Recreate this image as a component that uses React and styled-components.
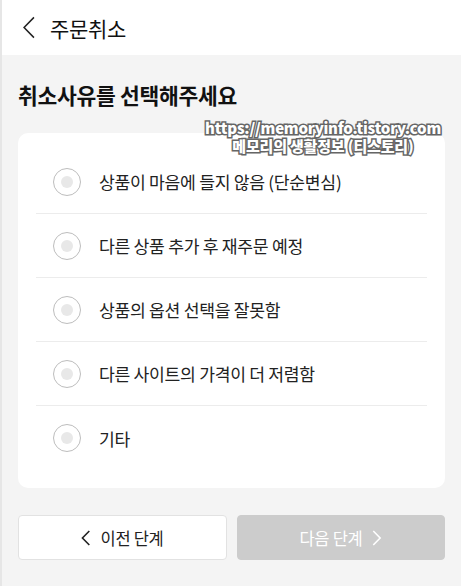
import React, { useState } from 'react'
import styled, { createGlobalStyle } from 'styled-components'

const GlobalStyle = createGlobalStyle`
  html, body {
    margin: 0;
    padding: 0;
    background: #f4f4f4;
  }
  body {
    font-family: "Noto Sans CJK KR", "Noto Sans", sans-serif;
    color: #222;
  }
`

const Page = styled.div`
  position: relative;
  width: 461px;
  height: 586px;
  box-sizing: border-box;
  border-left: 2px solid #e6e6e6;
  background: #f4f4f4;
  overflow: hidden;
`

const Header = styled.header`
  display: flex;
  align-items: center;
  height: 55px;
  padding-left: 17px;
  gap: 12px;
  background: #fff;
`

const BackButton = styled.button`
  display: flex;
  align-items: center;
  justify-content: center;
  width: 19px;
  height: 30px;
  padding: 0;
  border: 0;
  background: none;
  cursor: pointer;
`

const Title = styled.h1`
  margin: 0;
  font-size: 21px;
  font-weight: 400;
  letter-spacing: -0.3px;
  color: #111;
`

const Content = styled.main`
  padding: 24px 16px 0 16px;
`

const Heading = styled.h2`
  margin: 0 0 22px 0;
  height: 32px;
  line-height: 32px;
  font-size: 21.5px;
  font-weight: 700;
  letter-spacing: -0.3px;
  color: #111;
`

const Card = styled.div`
  background: #fff;
  border-radius: 10px;
  padding: 17px 18px 18px 18px;
`

const Option = styled.label`
  display: flex;
  align-items: center;
  gap: 18px;
  height: 64px;
  box-sizing: border-box;
  padding-left: 17px;
  border-bottom: ${p => (p.$last ? 'none' : '1px solid #ececec')};
  cursor: pointer;
`

const Radio = styled.span`
  display: flex;
  align-items: center;
  justify-content: center;
  width: 28px;
  height: 28px;
  box-sizing: border-box;
  border-radius: 50%;
  border: 1px solid ${p => (p.$checked ? '#222' : '#bdbdbd')};
  flex-shrink: 0;

  &::after {
    content: '';
    width: 12px;
    height: 12px;
    border-radius: 50%;
    background: ${p => (p.$checked ? '#222' : '#e8e8e8')};
  }
`

const OptionText = styled.span`
  font-size: 17.2px;
  letter-spacing: -0.3px;
  color: #222;
`

const Actions = styled.div`
  display: grid;
  grid-template-columns: 1fr 1fr;
  gap: 10px;
  margin-top: 27px;
`

const StepButton = styled.button`
  display: flex;
  align-items: center;
  justify-content: center;
  gap: 10px;
  height: 45px;
  border-radius: 4px;
  font-family: inherit;
  font-size: 16.5px;
  letter-spacing: -0.3px;
  border: 1px solid ${p => (p.$disabled ? '#cccccc' : '#e2e2e2')};
  background: ${p => (p.$disabled ? '#cccccc' : '#fff')};
  color: ${p => (p.$disabled ? '#fff' : '#222')};
  cursor: ${p => (p.$disabled ? 'default' : 'pointer')};
`

const Watermark = styled.div`
  position: absolute;
  top: 119px;
  left: 198px;
  width: 246px;
  text-align: center;
  font-family: "Noto Sans CJK KR", sans-serif;
  font-weight: 900;
  font-size: 15px;
  line-height: 18px;
  color: #fff;
  -webkit-text-stroke: 3px #666;
  paint-order: stroke fill;
  letter-spacing: -0.2px;
  pointer-events: none;
`

const Chevron = ({ dir = 'left', size = 14, color = '#222', stroke = 1.6 }) => (
  <svg width={size * 0.6} height={size} viewBox="0 0 6 10" fill="none">
    <path
      d={dir === 'left' ? 'M5.2 0.6 L0.9 5 L5.2 9.4' : 'M0.8 0.6 L5.1 5 L0.8 9.4'}
      stroke={color}
      strokeWidth={stroke}
      vectorEffect="non-scaling-stroke"
    />
  </svg>
)

const reasons = [
  '상품이 마음에 들지 않음 (단순변심)',
  '다른 상품 추가 후 재주문 예정',
  '상품의 옵션 선택을 잘못함',
  '다른 사이트의 가격이 더 저렴함',
  '기타',
]

export default function App() {
  const [selected, setSelected] = useState(null)

  return (
    <>
      <GlobalStyle />
      <Page>
        <Header>
          <BackButton aria-label="뒤로">
            <Chevron size={23} color="#222" stroke={1.5} />
          </BackButton>
          <Title>주문취소</Title>
        </Header>
        <Content>
          <Heading>취소사유를 선택해주세요</Heading>
          <Card>
            {reasons.map((r, i) => (
              <Option
                key={r}
                $last={i === reasons.length - 1}
                onClick={() => setSelected(i)}
              >
                <Radio $checked={selected === i} />
                <OptionText>{r}</OptionText>
              </Option>
            ))}
          </Card>
          <Actions>
            <StepButton>
              <Chevron size={16} color="#222" stroke={1.6} />
              이전 단계
            </StepButton>
            <StepButton $disabled>
              다음 단계
              <Chevron dir="right" size={16} color="#fff" stroke={1.6} />
            </StepButton>
          </Actions>
        </Content>
        <Watermark>
          https://memoryinfo.tistory.com
          <br />
          메모리의 생활정보 (티스토리)
        </Watermark>
      </Page>
    </>
  )
}
